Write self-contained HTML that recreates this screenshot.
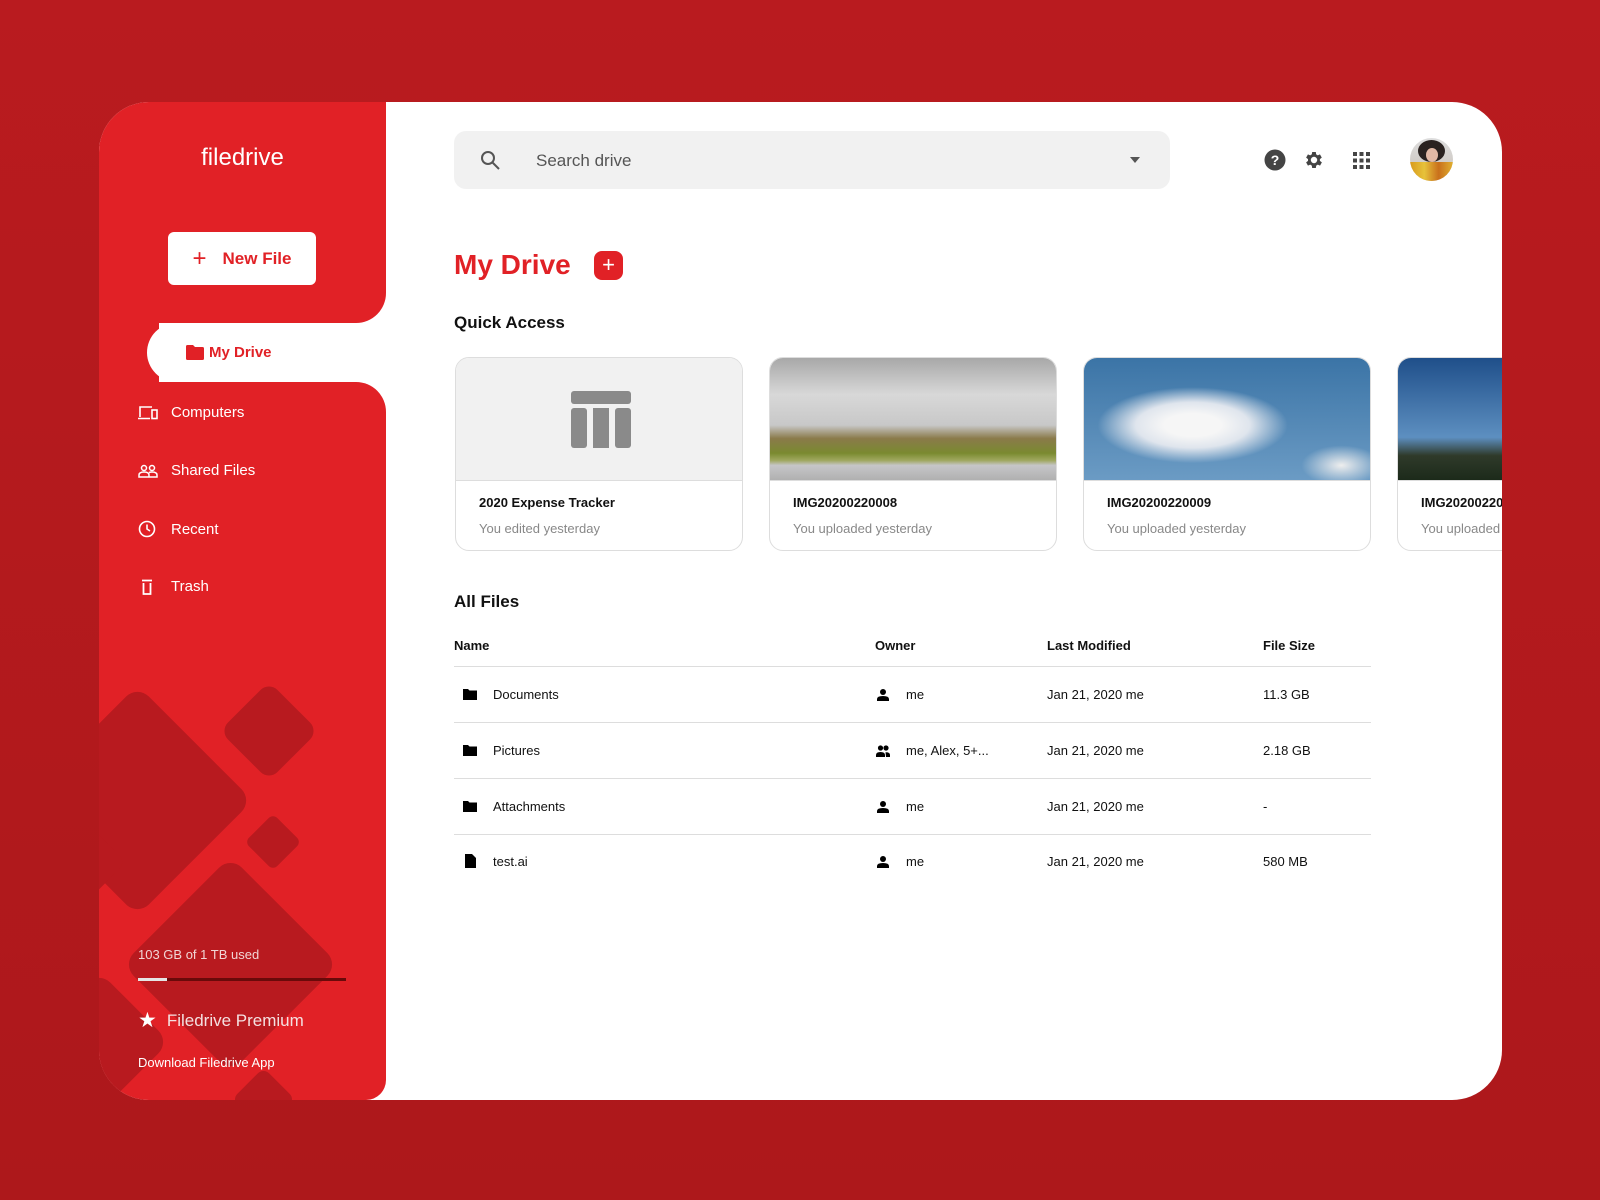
<!DOCTYPE html>
<html><head><meta charset="utf-8"><style>
*{margin:0;padding:0;box-sizing:border-box}
body{width:1600px;height:1200px;background:linear-gradient(#b91b1f,#ad181b);font-family:"Liberation Sans",sans-serif;position:relative;overflow:hidden}
.card{position:absolute;left:99px;top:102px;width:1403px;height:998px;background:#fff;border-radius:50px;overflow:hidden}
.a{position:absolute}
.sb1{left:0;top:0;width:287px;height:221px;background:#e12126;border-radius:0 0 30px 0}
.sb2{left:0;top:280px;width:287px;height:718px;background:#e12126;border-radius:0 30px 20px 0;overflow:hidden}
.tab{left:48px;top:221px;width:300px;height:59px;background:#fff;border-radius:30px 0 0 30px}
.dia{position:absolute;background:#b81a1f;transform:rotate(45deg);border-radius:16px}
.nav{position:absolute;left:39px;color:#fff;font-size:15px;display:flex;align-items:center}
.nav svg{margin-right:13px}
.t{position:absolute;font-size:13px;color:#111}
.qc{position:absolute;top:255px;width:288px;height:194px;border:1px solid #ddd;border-radius:14px;overflow:hidden;background:#fff}
.qc .im{height:123px;border-bottom:1px solid #ddd}
.qc b{position:absolute;left:23px;top:137px;font-size:13px;color:#111}
.qc span{position:absolute;left:23px;top:163px;font-size:13px;color:#888}
.ln{position:absolute;left:355px;width:917px;height:1px;background:#ddd}
</style></head><body>
<div class="card">
 <div class="a" style="left:0;top:200px;width:60px;height:100px;background:#e12126"></div>
 <div class="a sb1">
  <div class="a" style="left:0;width:287px;top:42px;text-align:center;color:#fff;font-size:24px">filedrive</div>
  <div class="a" style="left:69px;top:130px;width:148px;height:53px;background:#fff;border-radius:6px;color:#e12126;font-weight:bold;font-size:17px;display:flex;align-items:center;justify-content:center">
   <span style="font-size:24px;font-weight:normal;margin-right:16px">+</span>New File</div>
 </div>
 <div class="a tab">
  <svg class="a" style="left:39px;top:22px" width="18" height="15" viewBox="0 0 18 15"><path d="M0 1.5Q0 0 1.5 0H7l2 2h7.5Q18 2 18 3.5V13.5Q18 15 16.5 15H1.5Q0 15 0 13.5Z" fill="#e12126"/></svg>
  <div class="a" style="left:62px;top:21px;color:#e12126;font-weight:bold;font-size:15px">My Drive</div>
 </div>
 <div class="a sb2">
  <div class="dia" style="left:-43px;top:337px;width:163px;height:163px"></div>
  <div class="dia" style="left:135px;top:314px;width:70px;height:70px;border-radius:12px"></div>
  <div class="dia" style="left:154px;top:440px;width:40px;height:40px;border-radius:6px"></div>
  <div class="dia" style="left:55px;top:506px;width:153px;height:153px"></div>
  <div class="dia" style="left:-45px;top:450px;width:60px;height:60px;border-radius:10px"></div>
  <div class="dia" style="left:-50px;top:610px;width:100px;height:100px"></div>
  <div class="dia" style="left:142px;top:695px;width:45px;height:45px;border-radius:8px"></div>
 </div>
 <div class="nav" style="top:302px"><svg width="20" height="14" viewBox="0 0 20 14" fill="none" stroke="#fff" stroke-width="1.6"><path d="M2 11V1h12M0 12.5h12"/><rect x="14" y="4" width="5" height="8.5"/></svg>Computers</div>
 <div class="nav" style="top:360px"><svg width="20" height="14" viewBox="0 0 20 14" fill="none" stroke="#fff" stroke-width="1.5"><circle cx="6" cy="4" r="2.5"/><circle cx="14" cy="4" r="2.5"/><path d="M1 13v-2q0-3 5-3t5 3v2zM11 8.5q1.5-.5 3-.5 5 0 5 3v2h-8"/></svg>Shared Files</div>
 <div class="nav" style="top:418px"><svg width="20" height="18" viewBox="0 0 20 18" fill="none" stroke="#fff" stroke-width="1.6"><circle cx="9" cy="9" r="7.5"/><path d="M9 4.5V9l3 2"/></svg>Recent</div>
 <div class="nav" style="top:476px"><svg width="20" height="16" viewBox="0 0 20 16" fill="none" stroke="#fff" stroke-width="1.8"><path d="M4 1.5h10M5.5 4v11h7V4"/></svg>Trash</div>
 <div class="a" style="left:39px;top:845px;color:#f1d5d5;font-size:13px">103 GB of 1 TB used</div>
 <div class="a" style="left:39px;top:876px;width:208px;height:3px;background:#6a0a0a"></div>
 <div class="a" style="left:39px;top:876px;width:29px;height:3px;background:#e5e5e5"></div>
 <div class="a" style="left:39px;top:906px;color:#f4e0e0;font-size:17px;display:flex;align-items:center"><span style="font-size:21px;margin-right:10px;color:#fff">★</span>Filedrive Premium</div>
 <div class="a" style="left:39px;top:953px;color:#fff;font-size:13px">Download Filedrive App</div>

 <div class="a" style="left:355px;top:29px;width:716px;height:58px;background:#f1f1f1;border-radius:12px">
  <svg class="a" style="left:26px;top:19px" width="20" height="20" viewBox="0 0 20 20" fill="none" stroke="#555" stroke-width="2"><circle cx="8" cy="8" r="6"/><path d="M12.5 12.5L19 19"/></svg>
  <div class="a" style="left:82px;top:20px;font-size:17px;color:#555">Search drive</div>
  <div class="a" style="left:676px;top:26px;border:5px solid transparent;border-top:6px solid #555"></div>
 </div>
 <svg class="a" style="left:1165px;top:47px" width="22" height="22" viewBox="0 0 22 22"><circle cx="11" cy="11" r="10.5" fill="#444"/><text x="11" y="16" font-size="14" font-weight="bold" fill="#fff" text-anchor="middle" font-family="Liberation Sans">?</text></svg>
 <svg class="a" style="left:1204px;top:47px" width="22" height="22" viewBox="0 0 24 24"><path fill="#444" d="M19.4 13a7.5 7.5 0 000-2l2.1-1.6-2-3.5-2.5 1a7 7 0 00-1.7-1L15 3.3h-4l-.4 2.6a7 7 0 00-1.7 1l-2.5-1-2 3.5L6.5 11a7.5 7.5 0 000 2l-2.1 1.6 2 3.5 2.5-1a7 7 0 001.7 1l.4 2.6h4l.4-2.6a7 7 0 001.7-1l2.5 1 2-3.5zM13 15.5a3.5 3.5 0 110-7 3.5 3.5 0 010 7z" transform="translate(-1 0)"/></svg>
 <svg class="a" style="left:1254px;top:50px" width="17" height="17" viewBox="0 0 17 17" fill="#444"><rect x="0" y="0" width="4" height="4"/><rect x="6.5" y="0" width="4" height="4"/><rect x="13" y="0" width="4" height="4"/><rect x="0" y="6.5" width="4" height="4"/><rect x="6.5" y="6.5" width="4" height="4"/><rect x="13" y="6.5" width="4" height="4"/><rect x="0" y="13" width="4" height="4"/><rect x="6.5" y="13" width="4" height="4"/><rect x="13" y="13" width="4" height="4"/></svg>
 <div class="a" style="left:1311px;top:36px;width:43px;height:43px;border-radius:50%;overflow:hidden;background:linear-gradient(#ddd,#c8c0b8)">
  <div class="a" style="left:8px;top:2px;width:27px;height:22px;border-radius:50%;background:#2a2220"></div>
  <div class="a" style="left:16px;top:10px;width:12px;height:14px;border-radius:50%;background:#e2b9a6"></div>
  <div class="a" style="left:0;top:24px;width:43px;height:19px;background:linear-gradient(90deg,#d89a1c,#e7c23a,#c9701c,#e0b030)"></div></div>

 <div class="a" style="left:355px;top:147px;font-size:28px;font-weight:bold;color:#e12126">My Drive</div>
 <div class="a" style="left:495px;top:149px;width:29px;height:29px;background:#e12126;border-radius:8px;color:#fff;font-size:22px;text-align:center;line-height:28px">+</div>
 <div class="a" style="left:355px;top:211px;font-size:17px;font-weight:bold;color:#111">Quick Access</div>

 <div class="qc" style="left:356px"><div class="im" style="background:#f1f1f1;position:relative">
  <svg class="a" style="left:115px;top:33px" width="60" height="57" viewBox="0 0 60 57" fill="#8a8a8a"><rect x="0" y="0" width="60" height="13" rx="3"/><rect x="0" y="17" width="16" height="40" rx="3"/><rect x="22" y="17" width="16" height="40"/><rect x="44" y="17" width="16" height="40" rx="3"/></svg></div>
  <b>2020 Expense Tracker</b><span>You edited yesterday</span></div>
 <div class="qc" style="left:670px"><div class="im" style="background:linear-gradient(#a8a8a8 0%,#d8d8d8 30%,#c8c8c8 55%,#8a7a4a 66%,#7a8a30 78%,#a0a860 84%,#c6c6c8 88%,#b0b0b0 100%)"></div>
  <b>IMG20200220008</b><span>You uploaded yesterday</span></div>
 <div class="qc" style="left:984px"><div class="im" style="background:radial-gradient(ellipse 95px 38px at 38% 55%,#f6f6f6 30%,#dfe5ed 60%,transparent 100%),radial-gradient(ellipse 40px 20px at 90% 88%,#eee,transparent),linear-gradient(#3b74a6,#6b9bc4)"></div>
  <b>IMG20200220009</b><span>You uploaded yesterday</span></div>
 <div class="qc" style="left:1298px"><div class="im" style="background:linear-gradient(#1f4f8a,#5d8fc0 65%,#2f3a2a 80%,#1c2a1a)"></div>
  <b>IMG20200220</b><span>You uploaded yesterday</span></div>

 <div class="a" style="left:355px;top:490px;font-size:17px;font-weight:bold;color:#111">All Files</div>
 <div class="t" style="left:355px;top:536px;font-weight:bold">Name</div>
 <div class="t" style="left:776px;top:536px;font-weight:bold">Owner</div>
 <div class="t" style="left:948px;top:536px;font-weight:bold">Last Modified</div>
 <div class="t" style="left:1164px;top:536px;font-weight:bold">File Size</div>
 <div class="ln" style="top:564px"></div><div class="ln" style="top:620px"></div><div class="ln" style="top:676px"></div><div class="ln" style="top:732px"></div>

 <svg class="a" style="left:364px;top:586px" width="14" height="12" viewBox="0 0 14 12"><path d="M0 1h5l1.5 1.5H14V12H0Z"/></svg>
 <div class="t" style="left:394px;top:585px">Documents</div>
 <svg class="a" style="left:364px;top:642px" width="14" height="12" viewBox="0 0 14 12"><path d="M0 1h5l1.5 1.5H14V12H0Z"/></svg>
 <div class="t" style="left:394px;top:641px">Pictures</div>
 <svg class="a" style="left:364px;top:698px" width="14" height="12" viewBox="0 0 14 12"><path d="M0 1h5l1.5 1.5H14V12H0Z"/></svg>
 <div class="t" style="left:394px;top:697px">Attachments</div>
 <svg class="a" style="left:366px;top:752px" width="11" height="14" viewBox="0 0 11 14"><path d="M0 0h7l4 4v10H0Z"/></svg>
 <div class="t" style="left:394px;top:752px">test.ai</div>

 <svg class="a" style="left:778px;top:587px" width="12" height="12" viewBox="0 0 12 12"><circle cx="6" cy="3" r="3"/><path d="M0 12v-2q0-3 6-3t6 3v2z"/></svg>
 <div class="t" style="left:807px;top:585px">me</div>
 <svg class="a" style="left:777px;top:643px" width="14" height="12" viewBox="0 0 14 12"><circle cx="4.5" cy="3" r="2.6"/><circle cx="10" cy="3" r="2.6"/><path d="M0 12v-2q0-3 4.5-3t4.5 3v2zM9.5 7.2Q14 7 14 10v2h-4z"/></svg>
 <div class="t" style="left:807px;top:641px">me, Alex, 5+...</div>
 <svg class="a" style="left:778px;top:699px" width="12" height="12" viewBox="0 0 12 12"><circle cx="6" cy="3" r="3"/><path d="M0 12v-2q0-3 6-3t6 3v2z"/></svg>
 <div class="t" style="left:807px;top:697px">me</div>
 <svg class="a" style="left:778px;top:754px" width="12" height="12" viewBox="0 0 12 12"><circle cx="6" cy="3" r="3"/><path d="M0 12v-2q0-3 6-3t6 3v2z"/></svg>
 <div class="t" style="left:807px;top:752px">me</div>

 <div class="t" style="left:948px;top:585px">Jan 21, 2020 me</div>
 <div class="t" style="left:948px;top:641px">Jan 21, 2020 me</div>
 <div class="t" style="left:948px;top:697px">Jan 21, 2020 me</div>
 <div class="t" style="left:948px;top:752px">Jan 21, 2020 me</div>
 <div class="t" style="left:1164px;top:585px">11.3 GB</div>
 <div class="t" style="left:1164px;top:641px">2.18 GB</div>
 <div class="t" style="left:1164px;top:697px">-</div>
 <div class="t" style="left:1164px;top:752px">580 MB</div>
</div>
</body></html>
